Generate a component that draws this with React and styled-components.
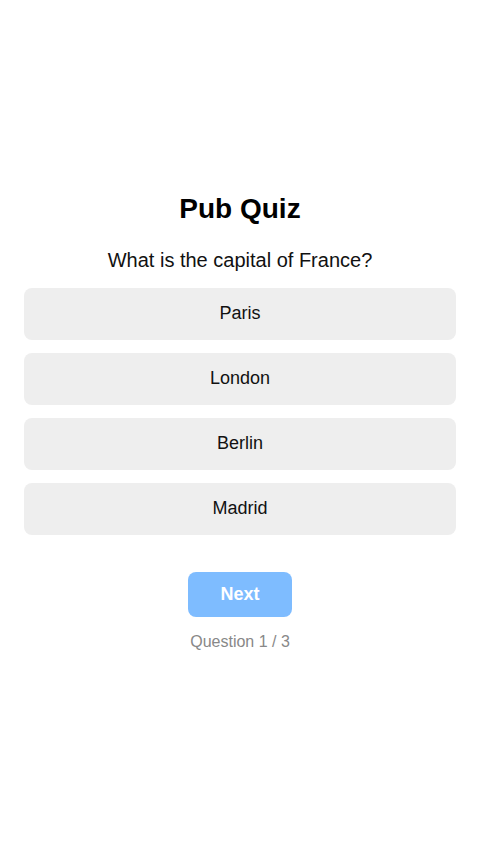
import React, { useState } from 'react';
import styled, { createGlobalStyle } from 'styled-components';

const GlobalStyle = createGlobalStyle`
  html, body {
    margin: 0;
    padding: 0;
    background: #fff;
    font-family: 'Liberation Sans', Arial, sans-serif;
  }
`;

const Page = styled.div`
  min-height: 100vh;
  display: flex;
  align-items: center;
  justify-content: center;
  padding: 0 24px;
  box-sizing: border-box;
`;

const Card = styled.div`
  width: 100%;
  display: flex;
  flex-direction: column;
  align-items: center;
`;

const Title = styled.h1`
  margin: 0 0 23px;
  font-size: 28px;
  line-height: 32px;
  font-weight: 700;
  color: #000;
`;

const Question = styled.p`
  margin: 0 0 16px;
  font-size: 20px;
  line-height: 24px;
  color: #111;
`;

const Options = styled.div`
  width: 100%;
  display: flex;
  flex-direction: column;
  gap: 13px;
`;

const Option = styled.button`
  width: 100%;
  height: 52px;
  border: none;
  border-radius: 8px;
  background: ${(p) => (p.$selected ? '#cfe3ff' : '#eeeeee')};
  font-family: inherit;
  font-size: 18px;
  color: #111;
  cursor: pointer;
`;

const NextButton = styled.button`
  margin-top: 37px;
  width: 104px;
  height: 45px;
  border: none;
  border-radius: 8px;
  background: #007bff;
  opacity: ${(p) => (p.disabled ? 0.5 : 1)};
  color: #fff;
  font-family: inherit;
  font-size: 18px;
  font-weight: 700;
`;

const Progress = styled.div`
  margin-top: 15px;
  font-size: 16px;
  line-height: 20px;
  color: #888;
`;

const options = ['Paris', 'London', 'Berlin', 'Madrid'];

const App = () => {
  const [selected, setSelected] = useState(null);
  return (
    <>
      <GlobalStyle />
      <Page>
        <Card>
          <Title>Pub Quiz</Title>
          <Question>What is the capital of France?</Question>
          <Options>
            {options.map((o) => (
              <Option key={o} $selected={selected === o} onClick={() => setSelected(o)}>
                {o}
              </Option>
            ))}
          </Options>
          <NextButton disabled={selected === null}>Next</NextButton>
          <Progress>Question 1 / 3</Progress>
        </Card>
      </Page>
    </>
  );
};

export default App;
